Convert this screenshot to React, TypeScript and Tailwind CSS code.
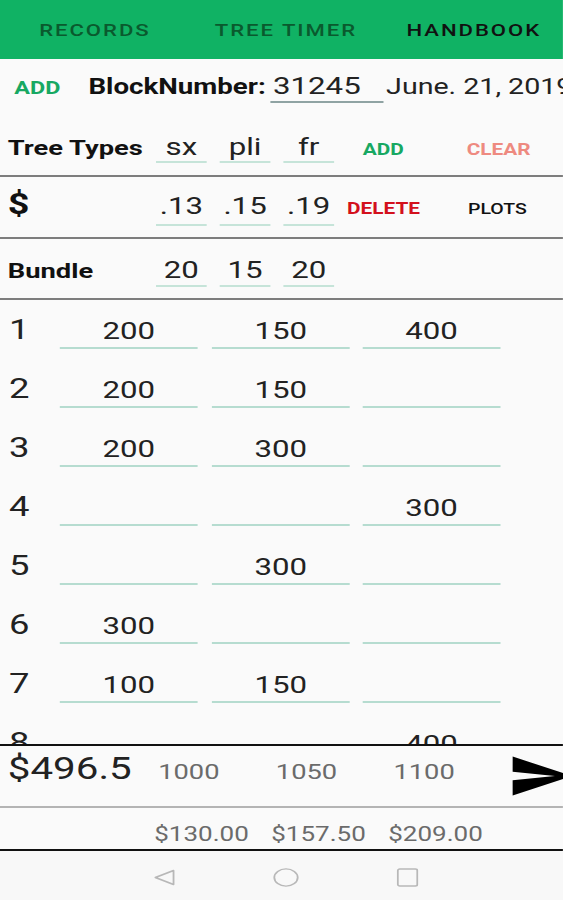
import React from "react";

const rows: string[][] = [
  ["200", "150", "400"],
  ["200", "150", ""],
  ["200", "300", ""],
  ["", "", "300"],
  ["", "300", ""],
  ["300", "", ""],
  ["100", "150", ""],
  ["", "", "400"],
];

function Field({ value, cls }: { value: string; cls: string }) {
  return (
    <div className={`shrink-0 text-center text-[24px] leading-[28px] text-[#222] border-b-2 ${cls}`}>
      {value || "\u00a0"}
    </div>
  );
}

export default function App() {
  return (
    <div className="w-[563px] h-[900px] overflow-hidden bg-[#fafafa]">
      <div className="w-[433.1px] h-[900px] origin-top-left scale-x-[1.3] flex flex-col font-['Roboto',sans-serif] text-[#222]">
        {/* Tabs */}
        <div className="h-[59px] shrink-0 bg-[#10b264] grid grid-cols-[146px_148px_141px] items-center pt-[3px] text-[17px] font-medium tracking-[1.5px]">
          <div className="text-center text-[#0a5a2e]">RECORDS</div>
          <div className="text-center text-[#0a5a2e]">TREE TIMER</div>
          <div className="text-center text-[#111]">HANDBOOK</div>
        </div>

        {/* Block number row */}
        <div className="h-[60px] shrink-0 flex items-baseline pt-[13px] pl-[11px] whitespace-nowrap">
          <div className="w-[57px] shrink-0 text-[18px] leading-[20px] font-bold text-[#17a862]">ADD</div>
          <div className="w-[140px] shrink-0 text-[21.3px] leading-[20px] font-bold text-[#111]">BlockNumber:</div>
          <div className="w-[87px] shrink-0 pl-[2px] text-[24px] leading-[28px] pb-[1px] border-b-2 border-[#8fa3a3] text-[#222]">31245</div>
          <div className="ml-[2px] shrink-0 text-[22px] leading-[20px] text-[#222]">June. 21, 2019</div>
        </div>

        {/* Tree types */}
        <div className="h-[56px] shrink-0 flex items-baseline pt-[14px] whitespace-nowrap">
          <div className="w-[120px] shrink-0 pl-[6px] text-[21px] leading-[20px] font-bold text-[#111]">Tree Types</div>
          <Field value="sx" cls="w-[39px] border-[#c6e4d9]" />
          <Field value="pli" cls="w-[39px] ml-[10px] border-[#c6e4d9]" />
          <Field value="fr" cls="w-[39px] ml-[10px] border-[#c6e4d9]" />
          <div className="w-[102px] shrink-0 pl-[22px] text-[16px] leading-[20px] font-bold text-[#17a862]">ADD</div>
          <div className="shrink-0 text-[16px] leading-[20px] font-bold text-[#ee8a80]">CLEAR</div>
        </div>
        <div className="h-[2px] shrink-0 bg-[#7d7d7d]" />

        {/* Prices */}
        <div className="h-[60px] shrink-0 flex items-baseline pt-[15px] whitespace-nowrap">
          <div className="w-[120px] shrink-0 pl-[6px] text-[29px] leading-[20px] font-bold text-[#111]">$</div>
          <Field value=".13" cls="w-[39px] pb-[4px] border-[#c6e4d9]" />
          <Field value=".15" cls="w-[39px] ml-[10px] pb-[4px] border-[#c6e4d9]" />
          <Field value=".19" cls="w-[39px] ml-[10px] pb-[4px] border-[#c6e4d9]" />
          <div className="w-[103px] shrink-0 pl-[10px] text-[16px] leading-[20px] font-bold text-[#d3101c]">DELETE</div>
          <div className="shrink-0 text-[15px] leading-[20px] font-medium text-[#111]">PLOTS</div>
        </div>
        <div className="h-[2px] shrink-0 bg-[#7d7d7d]" />

        {/* Bundle */}
        <div className="h-[59px] shrink-0 flex items-baseline pt-[17px] whitespace-nowrap">
          <div className="w-[120px] shrink-0 pl-[6px] text-[21px] leading-[20px] font-bold text-[#111]">Bundle</div>
          <Field value="20" cls="w-[39px] pb-[1px] border-[#c6e4d9]" />
          <Field value="15" cls="w-[39px] ml-[10px] pb-[1px] border-[#c6e4d9]" />
          <Field value="20" cls="w-[39px] ml-[10px] pb-[1px] border-[#c6e4d9]" />
        </div>
        <div className="h-[2px] shrink-0 bg-[#7d7d7d]" />

        {/* Plot rows */}
        <div className="h-[444px] shrink-0 overflow-hidden">
          {rows.map((r, i) => (
            <div key={i} className="h-[59px] flex items-baseline pt-[17px]">
              <div className="w-[46px] shrink-0 pl-[7px] text-[28px] leading-[20px] text-[#222]">{i + 1}</div>
              <Field value={r[0]} cls="w-[106px] pb-[2px] border-[#b6dcd0]" />
              <Field value={r[1]} cls="w-[106px] ml-[11px] pb-[2px] border-[#b6dcd0]" />
              <Field value={r[2]} cls="w-[106px] ml-[10px] pb-[2px] border-[#b6dcd0]" />
            </div>
          ))}
        </div>
        <div className="h-[2px] shrink-0 bg-[#111]" />

        {/* Totals */}
        <div className="h-[60px] shrink-0 flex items-baseline pt-[7px] whitespace-nowrap">
          <div className="w-[100px] shrink-0 pl-[6px] text-[31px] leading-[32px] text-[#222]">$496.5</div>
          <div className="w-[90.5px] shrink-0 text-center text-[21px] leading-[24px] text-[#6b6b6b]">1000</div>
          <div className="w-[90.5px] shrink-0 text-center text-[21px] leading-[24px] text-[#6b6b6b]">1050</div>
          <div className="w-[90.5px] shrink-0 text-center text-[21px] leading-[24px] text-[#6b6b6b]">1100</div>
          <svg className="self-start ml-[18px] mt-[-3px] shrink-0" width="52" height="52" viewBox="0 0 24 24">
            <path d="M2.01 21L23 12 2.01 3 2 10l15 2-15 2z" fill="#000" />
          </svg>
        </div>
        <div className="h-[2px] shrink-0 bg-[#b4b4b4]" />
        <div className="h-[41px] shrink-0 flex items-baseline pt-[14px] pl-[110px] whitespace-nowrap">
          <div className="w-[90px] shrink-0 text-center text-[20px] leading-[24px] text-[#6b6b6b]">$130.00</div>
          <div className="w-[90px] shrink-0 text-center text-[20px] leading-[24px] text-[#6b6b6b]">$157.50</div>
          <div className="w-[90px] shrink-0 text-center text-[20px] leading-[24px] text-[#6b6b6b]">$209.00</div>
        </div>
        <div className="h-[2px] shrink-0 bg-[#111]" />

        {/* Nav bar */}
        <div className="h-[49px] shrink-0 flex items-center pt-[3px] pl-[118px] gap-[75px] bg-[#f8f8f8]">
          <svg width="17" height="17" viewBox="0 0 17 17">
            <polygon points="1.5,8.5 15.5,1.5 15.5,15.5" fill="none" stroke="#b8b8b8" strokeWidth="1.4" strokeLinejoin="round" />
          </svg>
          <svg width="20" height="19" viewBox="0 0 20 19">
            <ellipse cx="10" cy="9.5" rx="9" ry="8.6" fill="none" stroke="#b8b8b8" strokeWidth="1.4" />
          </svg>
          <svg width="17" height="19" viewBox="0 0 17 19">
            <rect x="1" y="1" width="15" height="17" rx="1.5" fill="none" stroke="#b8b8b8" strokeWidth="1.4" />
          </svg>
        </div>
      </div>
    </div>
  );
}
